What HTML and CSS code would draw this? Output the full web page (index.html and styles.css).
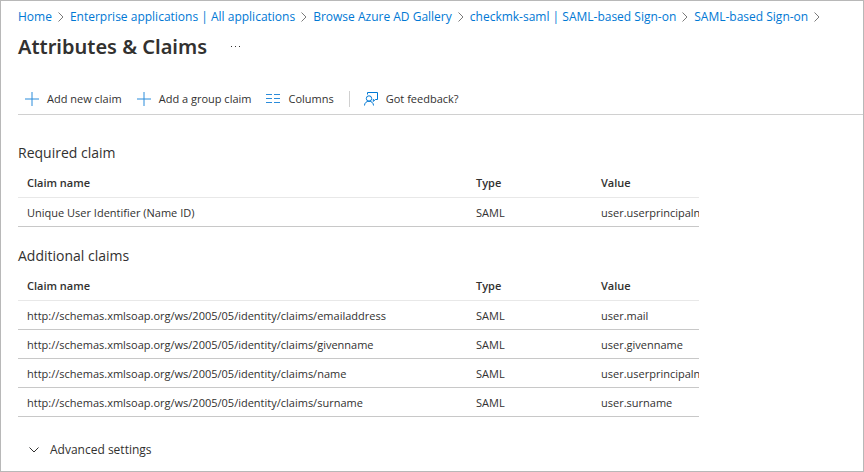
FILE: index.html
```html
<!DOCTYPE html>
<html lang="en">
<head>
    <meta charset="UTF-8">
    <meta name="viewport" content="width=device-width, initial-scale=1.0">
    <title>Attributes &amp; Claims</title>
    <link rel="stylesheet" href="styles.css">
</head>
<body>
    <div class="page">
        <nav class="breadcrumb" aria-label="Breadcrumb">
            <a href="#">Home</a>
            <svg class="sep" viewBox="0 0 6 10"><path d="M.5 .5 5 5 .5 9.500"/></svg>
            <a href="#">Enterprise applications | All applications</a>
            <svg class="sep" viewBox="0 0 6 10"><path d="M.5 .5 5 5 .5 9.500"/></svg>
            <a href="#">Browse Azure AD Gallery</a>
            <svg class="sep" viewBox="0 0 6 10"><path d="M.5 .5 5 5 .5 9.500"/></svg>
            <a href="#">checkmk-saml | SAML-based Sign-on</a>
            <svg class="sep" viewBox="0 0 6 10"><path d="M.5 .5 5 5 .5 9.500"/></svg>
            <a href="#">SAML-based Sign-on</a>
            <svg class="sep" viewBox="0 0 6 10"><path d="M.5 .5 5 5 .5 9.500"/></svg>
        </nav>

        <header class="title">
            <h1>Attributes &amp; Claims</h1>
            <button class="more" type="button" aria-label="More">
                <svg viewBox="0 0 10 2"><path d="M0 0h1v1H0zM4 0h1v1H4zM8 0h1v1H8z"/></svg>
            </button>
        </header>

        <div class="toolbar">
            <button type="button">
                <svg viewBox="0 0 14 14"><path d="M7 0v14M0 7h14"/></svg>
                Add new claim
            </button>
            <button type="button">
                <svg viewBox="0 0 14 14"><path d="M7 0v14M0 7h14"/></svg>
                Add a group claim
            </button>
            <button type="button">
                <svg viewBox="0 0 14 14"><path d="M0 2.500h6M8 2.500h6M0 6.500h6M8 6.500h6M0 10.500h6M8 10.500h6"/></svg>
                Columns
            </button>
            <button class="feedback" type="button">
                <svg viewBox="0 0 14 14"><path d="M3.500 2.500V.5h10v7h-2.200l-2 2v-2.500M.5 13.500c0-2.500 2-4.300 4.500-4.300s4.500 1.800 4.500 4.300"/><circle cx="5" cy="6.500" r="2.700"/></svg>
                Got feedback?
            </button>
        </div>

        <main class="content">
            <h2>Required claim</h2>
            <table>
                <thead>
                    <tr><th>Claim name</th><th class="type">Type</th><th class="value">Value</th></tr>
                </thead>
                <tbody>
                    <tr><td>Unique User Identifier (Name ID)</td><td>SAML</td><td>user.userprincipalname</td></tr>
                </tbody>
            </table>

            <h2>Additional claims</h2>
            <table>
                <thead>
                    <tr><th>Claim name</th><th class="type">Type</th><th class="value">Value</th></tr>
                </thead>
                <tbody>
                    <tr><td>http://schemas.xmlsoap.org/ws/2005/05/identity/claims/emailaddress</td><td>SAML</td><td>user.mail</td></tr>
                    <tr><td>http://schemas.xmlsoap.org/ws/2005/05/identity/claims/givenname</td><td>SAML</td><td>user.givenname</td></tr>
                    <tr><td>http://schemas.xmlsoap.org/ws/2005/05/identity/claims/name</td><td>SAML</td><td>user.userprincipalname</td></tr>
                    <tr><td>http://schemas.xmlsoap.org/ws/2005/05/identity/claims/surname</td><td>SAML</td><td>user.surname</td></tr>
                </tbody>
            </table>

            <button class="advanced" type="button">
                <svg viewBox="0 0 10 6"><path d="M.5 .5 5 5 9.500 .5"/></svg>
                Advanced settings
            </button>
        </main>
    </div>
</body>
</html>
```
FILE: styles.css
```css
* {
    box-sizing: border-box;
}
body {
    margin: 0;
    font-family: "Open Sans", "Noto Sans", sans-serif;
    font-size: 11px;
    color: #323130;
    background: #ffffff;
}
.page {
    min-height: 100vh;
    padding-left: 17px;
    border: 1px solid #b8b8b8;
}
button {
    padding: 0;
    border: none;
    background: none;
    font: inherit;
    color: inherit;
    cursor: pointer;
}
svg {
    fill: none;
    flex: none;
}

/* breadcrumb */
.breadcrumb {
    display: flex;
    align-items: center;
    gap: 6px;
    padding-top: 7px;
    font-size: 12px;
    line-height: 18px;
    white-space: nowrap;
}
.breadcrumb a {
    color: #0078d4;
    text-decoration: none;
}
.breadcrumb a:hover {
    text-decoration: underline;
}
.sep {
    width: 6px;
    height: 10px;
    stroke: #7a7a7a;
}

/* title */
.title {
    display: flex;
    align-items: center;
    gap: 24px;
    margin-top: 5px;
}
h1 {
    margin: 0;
    font-family: "Noto Sans", sans-serif;
    font-size: 20px;
    font-weight: 600;
    line-height: 32px;
}
.more svg {
    display: block;
    width: 10px;
    height: 2px;
    fill: #323130;
}

/* toolbar */
.toolbar {
    display: flex;
    align-items: center;
    gap: 15px;
    margin-top: 20px;
    padding: 8px 7px 7px;
    border-bottom: 1px solid #d0d0d0;
}
.toolbar button {
    display: flex;
    align-items: center;
    gap: 8px;
    line-height: 16px;
    white-space: nowrap;
}
.toolbar svg {
    width: 14px;
    height: 14px;
    stroke: #2b8cdb;
}
.toolbar .feedback {
    padding-left: 14px;
    border-left: 1px solid #d0d0d0;
}
.toolbar .feedback svg {
    stroke: #0078d4;
}

/* claims */
.content {
    margin-right: 164px;
    padding-top: 28px;
}
h2 {
    margin: 0;
    font-size: 14px;
    font-weight: 400;
    line-height: 20px;
}
table {
    width: 100%;
    table-layout: fixed;
    border-collapse: separate;
    border-spacing: 0;
    margin-bottom: 19px;
}
th, td {
    padding: 0 0 0 9px;
    text-align: left;
    white-space: nowrap;
    overflow: hidden;
}
th {
    height: 35px;
    padding-top: 5px;
    font-weight: 600;
    border-bottom: 1px solid #e8e8e8;
}
td {
    height: 29px;
    border-bottom: 1px solid #c8c8c8;
}
.type {
    width: 125px;
}
.value {
    width: 107px;
}
.advanced {
    display: flex;
    align-items: center;
    gap: 11px;
    margin: 24px 0 12px;
    padding-left: 11px;
    font-size: 12px;
    line-height: 18px;
}
.advanced svg {
    width: 10px;
    height: 6px;
    stroke: #323130;
}
```
